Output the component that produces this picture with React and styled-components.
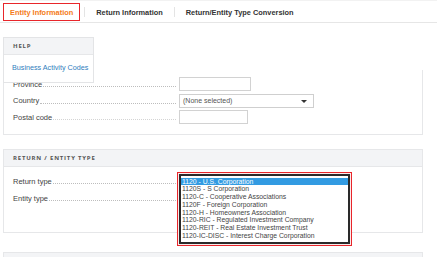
import React from 'react'
import styled, { createGlobalStyle } from 'styled-components'

const Global = createGlobalStyle`
  html, body {
    margin: 0;
    background: #fff;
    font-family: "Liberation Sans", Arial, sans-serif;
    overflow: hidden;
  }
`

const returnTypes = [
  '1120 - U.S. Corporation',
  '1120S - S Corporation',
  '1120-C - Cooperative Associations',
  '1120F - Foreign Corporation',
  '1120-H - Homeowners Association',
  '1120-RIC - Regulated Investment Company',
  '1120-REIT - Real Estate Investment Trust',
  '1120-IC-DISC - Interest Charge Corporation',
]

export default function App() {
  return (
    <Page>
      <Global />
      <TabBar>
        <Tab $active>Entity Information</Tab>
        <TabDivider />
        <Tab>Return Information</Tab>
        <TabDivider />
        <Tab>Return/Entity Type Conversion</Tab>
      </TabBar>

      <Content>
        <HelpPanel>
          <CardHeader>Help</CardHeader>
          <HelpBody>
            <HelpLink>Business Activity Codes</HelpLink>
          </HelpBody>
        </HelpPanel>

        <Card $flush>
          <Rows>
            <FieldRow>
              <LabelCell>
                <Label>Province</Label>
                <Leader />
              </LabelCell>
              <TextInput $w={72} />
            </FieldRow>
            <FieldRow>
              <LabelCell>
                <Label>Country</Label>
                <Leader />
              </LabelCell>
              <Select>
                <span>(None selected)</span>
                <Caret />
              </Select>
            </FieldRow>
            <FieldRow>
              <LabelCell>
                <Label>Postal code</Label>
                <Leader $light />
              </LabelCell>
              <TextInput $w={69} />
            </FieldRow>
          </Rows>
        </Card>

        <Card $gap={14}>
          <CardHeader>Return / Entity Type</CardHeader>
          <CardBody>
            <Rows $gap={3}>
              <FieldRow>
                <LabelCell>
                  <Label>Return type</Label>
                  <Leader />
                </LabelCell>
                <Slot>
                  <ListOutline>
                    <ListBox>
                      {returnTypes.map((t, i) => (
                        <Option key={t} $selected={i === 0}>{t}</Option>
                      ))}
                    </ListBox>
                  </ListOutline>
                </Slot>
              </FieldRow>
              <FieldRow>
                <LabelCell>
                  <Label>Entity type</Label>
                  <Leader />
                </LabelCell>
                <Slot />
              </FieldRow>
            </Rows>
          </CardBody>
        </Card>

        <Card $gap={19}>
          <CardHeader>Dates</CardHeader>
          <CardBody />
        </Card>
      </Content>
    </Page>
  )
}

const Page = styled.div`
  width: 437px;
  height: 257px;
  overflow: hidden;
`

const TabBar = styled.div`
  display: flex;
  align-items: flex-start;
  height: 23px;
  box-sizing: border-box;
  padding: 2px 0 0 3px;
  border-top: 1px solid #f2f2f2;
  border-bottom: 1px solid #e6e6e6;
`

const Tab = styled.div`
  height: 18px;
  box-sizing: border-box;
  padding: 0 6px;
  display: flex;
  align-items: center;
  font-size: 7.4px;
  font-weight: bold;
  white-space: nowrap;
  color: ${p => (p.$active ? '#f47b20' : '#333')};
  border: 1px solid ${p => (p.$active ? '#e8262b' : 'transparent')};
`

const TabDivider = styled.div`
  width: 1px;
  height: 10px;
  margin: 4px 4px 0;
  background: #e4e4e4;
`

const Content = styled.div`
  position: relative;
  display: flow-root;
  padding: 0 14px 0 3px;
`

const HelpPanel = styled.div`
  position: absolute;
  left: 3px;
  top: 14px;
  width: 91px;
  box-sizing: border-box;
  background: #fff;
  border: 1px solid #e3e4e6;
  z-index: 2;
`

const CardHeader = styled.div`
  height: 17px;
  box-sizing: border-box;
  display: flex;
  align-items: center;
  padding-left: 9px;
  background: #f3f4f6;
  border-bottom: 1px solid #e6e7e9;
  font-family: "Open Sans", "Liberation Sans", sans-serif;
  font-size: 6px;
  font-weight: bold;
  letter-spacing: 0.8px;
  text-transform: uppercase;
  color: #555;
`

const HelpBody = styled.div`
  height: 27px;
  display: flex;
  align-items: center;
  padding: 0 0 2px 8px;
  box-sizing: border-box;
`

const HelpLink = styled.a`
  font-size: 7.2px;
  color: #2f7dbd;
  white-space: nowrap;
`

const Card = styled.div`
  margin-top: ${p => (p.$flush ? 47 : p.$gap)}px;
  border: 1px solid #e6e7e9;
  border-top: ${p => (p.$flush ? 'none' : '1px solid #e6e7e9')};
  background: #fff;
  padding: ${p => (p.$flush ? '7px 9px 10px' : '0')};
`

const CardBody = styled.div`
  min-height: 65px;
  box-sizing: border-box;
  padding: 7px 9px 0;
`

const Rows = styled.div`
  display: flex;
  flex-direction: column;
  gap: ${p => p.$gap ?? 2.5}px;
`

const FieldRow = styled.div`
  display: flex;
  align-items: center;
  height: 14px;
`

const LabelCell = styled.div`
  flex: 0 0 166px;
  display: flex;
  align-items: center;
`

const Label = styled.div`
  font-size: 7.5px;
  color: #444;
  white-space: nowrap;
`

const Leader = styled.div`
  flex: 1;
  margin: 5px 3px 0 1px;
  border-bottom: 1px dotted ${p => (p.$light ? '#d4d4d4' : '#bdbdbd')};
`

const TextInput = styled.div`
  width: ${p => p.$w}px;
  height: 14px;
  box-sizing: border-box;
  border: 1px solid #d2d2d2;
  background: #fff;
`

const Select = styled.div`
  width: 135px;
  height: 14px;
  box-sizing: border-box;
  border: 1px solid #cfcfcf;
  display: flex;
  align-items: center;
  justify-content: space-between;
  padding: 0 6px 0 3px;
  font-size: 7px;
  color: #555;
`

const Caret = styled.span`
  width: 0;
  height: 0;
  border-left: 3px solid transparent;
  border-right: 3px solid transparent;
  border-top: 3px solid #333;
  margin-top: 1px;
`

const Slot = styled.div`
  position: relative;
  width: 135px;
  height: 14px;
`

const ListOutline = styled.div`
  position: absolute;
  top: -2px;
  left: -2px;
  width: 175px;
  box-sizing: border-box;
  border: 1px solid #e8262b;
  padding: 1px;
  background: #fbeaea;
  z-index: 3;
`

const ListBox = styled.div`
  border: 2px solid #2a2a2a;
  background: #fff;
  padding: 1.5px 0 2.5px;
`

const Option = styled.div`
  height: 7.76px;
  line-height: 7.76px;
  padding-left: 1px;
  font-size: 6.8px;
  white-space: nowrap;
  color: ${p => (p.$selected ? '#fff' : '#444')};
  background: ${p => (p.$selected ? '#329be2' : 'transparent')};
`
